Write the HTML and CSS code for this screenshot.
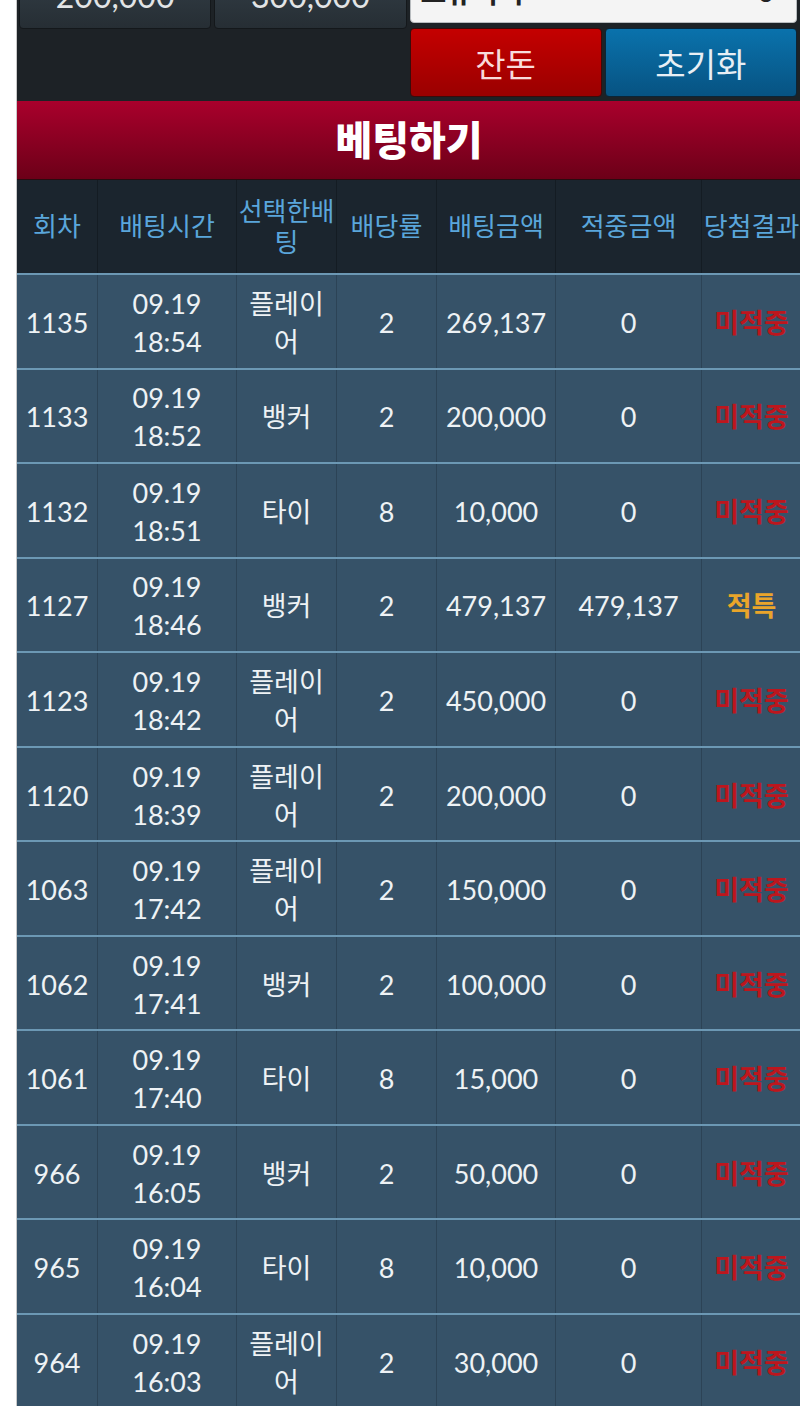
FILE: index.html
```html
<!DOCTYPE html>
<html lang="ko">
<head>
<meta charset="utf-8">
<title>베팅하기</title>
<link rel="stylesheet" href="styles.css">
</head>
<body>
<div class="wrap">
  <div class="top">
    <div class="left">
      <div class="money-btn">200,000</div>
      <div class="money-btn">300,000</div>
    </div>
    <div class="right">
      <div class="input"><span>보유머니</span><span>0</span></div>
      <div class="actions">
        <div class="act red">잔돈</div>
        <div class="act blue">초기화</div>
      </div>
    </div>
  </div>
  <div class="bet-bar">베팅하기</div>
  <div class="table">
    <div class="thead">
      <div>회차</div><div>배팅시간</div><div>선택한배팅</div><div>배당률</div><div>배팅금액</div><div>적중금액</div><div>당첨결과</div>
    </div>
    <div class="row"><div>1135</div><div>09.19 18:54</div><div>플레이어</div><div>2</div><div>269,137</div><div>0</div><div class="lose">미적중</div></div>
    <div class="row"><div>1133</div><div>09.19 18:52</div><div>뱅커</div><div>2</div><div>200,000</div><div>0</div><div class="lose">미적중</div></div>
    <div class="row"><div>1132</div><div>09.19 18:51</div><div>타이</div><div>8</div><div>10,000</div><div>0</div><div class="lose">미적중</div></div>
    <div class="row"><div>1127</div><div>09.19 18:46</div><div>뱅커</div><div>2</div><div>479,137</div><div>479,137</div><div class="special">적특</div></div>
    <div class="row"><div>1123</div><div>09.19 18:42</div><div>플레이어</div><div>2</div><div>450,000</div><div>0</div><div class="lose">미적중</div></div>
    <div class="row"><div>1120</div><div>09.19 18:39</div><div>플레이어</div><div>2</div><div>200,000</div><div>0</div><div class="lose">미적중</div></div>
    <div class="row"><div>1063</div><div>09.19 17:42</div><div>플레이어</div><div>2</div><div>150,000</div><div>0</div><div class="lose">미적중</div></div>
    <div class="row"><div>1062</div><div>09.19 17:41</div><div>뱅커</div><div>2</div><div>100,000</div><div>0</div><div class="lose">미적중</div></div>
    <div class="row"><div>1061</div><div>09.19 17:40</div><div>타이</div><div>8</div><div>15,000</div><div>0</div><div class="lose">미적중</div></div>
    <div class="row"><div>966</div><div>09.19 16:05</div><div>뱅커</div><div>2</div><div>50,000</div><div>0</div><div class="lose">미적중</div></div>
    <div class="row"><div>965</div><div>09.19 16:04</div><div>타이</div><div>8</div><div>10,000</div><div>0</div><div class="lose">미적중</div></div>
    <div class="row"><div>964</div><div>09.19 16:03</div><div>플레이어</div><div>2</div><div>30,000</div><div>0</div><div class="lose">미적중</div></div>
  </div>
</div>
</body>
</html>
```
FILE: styles.css
```css
html, body {
  margin: 0;
  padding: 0;
  background: #ffffff;
  overflow: hidden;
}
body {
  font-family: Lato, "Noto Sans CJK KR", sans-serif;
}
.wrap {
  margin-left: 16px;
  border-left: 1px solid #c9c9c9;
  width: 784px;
}
.top {
  background: #1d2226;
  margin-top: -33px;
  padding: 0 4px 4px 2px;
  display: flex;
  gap: 3px;
}
.left {
  flex: 1;
  display: grid;
  grid-template-columns: 1fr 1fr;
  gap: 3px;
  align-content: start;
}
.right {
  flex: 1;
  display: flex;
  flex-direction: column;
  gap: 5px;
}
.money-btn {
  height: 62px;
  box-sizing: border-box;
  border: 1px solid #14181b;
  border-radius: 4px;
  background: linear-gradient(#343f48, #262e34);
  color: #e2e4e6;
  font-size: 32px;
  display: flex;
  align-items: center;
  justify-content: center;
  padding-bottom: 6px;
}
.input {
  height: 56px;
  box-sizing: border-box;
  background: #f4f4f4;
  border: 1px solid #b8bcbf;
  border-radius: 0 0 4px 4px;
  display: flex;
  justify-content: space-between;
  align-items: center;
  padding: 0 22px 8px 10px;
  font-size: 28px;
  font-weight: bold;
  color: #222;
}
.actions {
  display: grid;
  grid-template-columns: 1fr 1fr;
  gap: 3px;
}
.act {
  height: 69px;
  box-sizing: border-box;
  border-radius: 4px;
  font-size: 33px;
  display: flex;
  align-items: center;
  justify-content: center;
}
.red {
  background: linear-gradient(#c40000, #9a0000);
  border: 1px solid #3b0b0b;
  color: #f8dcdc;
}
.blue {
  background: linear-gradient(#0a72ac, #075382);
  border: 1px solid #0b2536;
  color: #e8eff5;
}
.bet-bar {
  height: 79px;
  box-sizing: border-box;
  padding-bottom: 4px;
  background: linear-gradient(#a9002c, #6c0018);
  border-bottom: 1px solid #2a0b10;
  color: #ffffff;
  font-weight: 900;
  font-size: 40px;
  display: flex;
  align-items: center;
  justify-content: center;
}
.thead,
.row {
  display: grid;
  grid-template-columns: 80px 139px 100px 100px 119px 146px 100px;
}
.thead {
  height: 93px;
  background: #1b252e;
  color: #5aa6db;
  font-size: 26px;
  line-height: 31px;
}
.thead > div,
.row > div {
  display: flex;
  align-items: center;
  justify-content: center;
  text-align: center;
  border-left: 1px solid #141c23;
}
.thead > div:first-child,
.row > div:first-child {
  border-left: none;
}
.row {
  height: 94.55px;
  box-sizing: border-box;
  border-top: 2px solid #6c98b4;
  background: #365268;
  color: #eef2f5;
  font-size: 27px;
  line-height: 38px;
}
.row > div {
  border-left-color: #2c4356;
  padding: 3px 4px 0;
}
.row > div.lose {
  color: #bd161d;
  font-weight: bold;
}
.row > div.special {
  color: #eaa52a;
  font-weight: bold;
}
```
